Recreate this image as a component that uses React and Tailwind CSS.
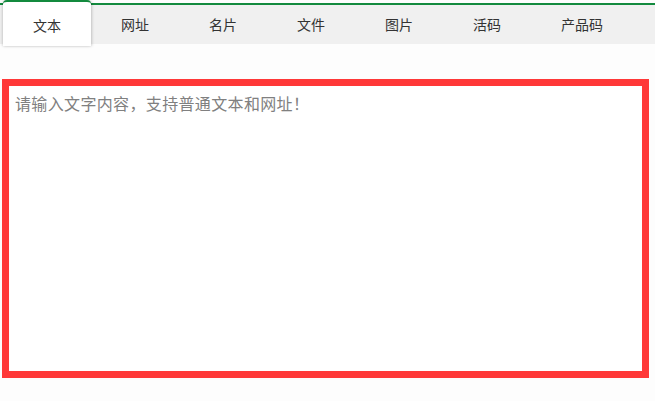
export default function App() {
  const tabs = ["文本", "网址", "名片", "文件", "图片", "活码", "产品码"];
  const font = { fontFamily: '"Microsoft YaHei", "Noto Sans CJK SC", sans-serif' };
  return (
    <div className="w-[655px] h-[401px] bg-[#fdfdfd] overflow-hidden" style={font}>
      {/* Tab bar */}
      <div className="mt-[3px] h-[41px] bg-[#f0f0f0] border-t-2 border-[#138a3e] flex pl-[3px]">
        {tabs.map((t, i) =>
          i === 0 ? (
            <div
              key={t}
              className="-mt-[5px] h-[46px] px-[30px] flex items-center pt-[3px] bg-white border-t-2 border-[#138a3e] rounded-t-[4px] shadow-[1px_0_3px_rgba(0,0,0,0.18),-1px_0_3px_rgba(0,0,0,0.12)] text-[14px] text-[#333] relative z-10"
            >
              {t}
            </div>
          ) : (
            <div key={t} className="h-full px-[30px] flex items-center text-[14px] text-[#333]">
              {t}
            </div>
          )
        )}
      </div>

      {/* Text input */}
      <div className="mt-[35px] ml-[2px] w-[647px] h-[299px] border-[7px] border-[#ff3838] bg-white">
        <textarea
          className="w-full h-full resize-none outline-none pl-[6px] pr-[5px] pt-[6px] text-[16px] leading-[22px] tracking-[0.35px] text-[#333] placeholder:text-[#808080] bg-transparent"
          style={font}
          placeholder="请输入文字内容，支持普通文本和网址！"
        />
      </div>
    </div>
  );
}
